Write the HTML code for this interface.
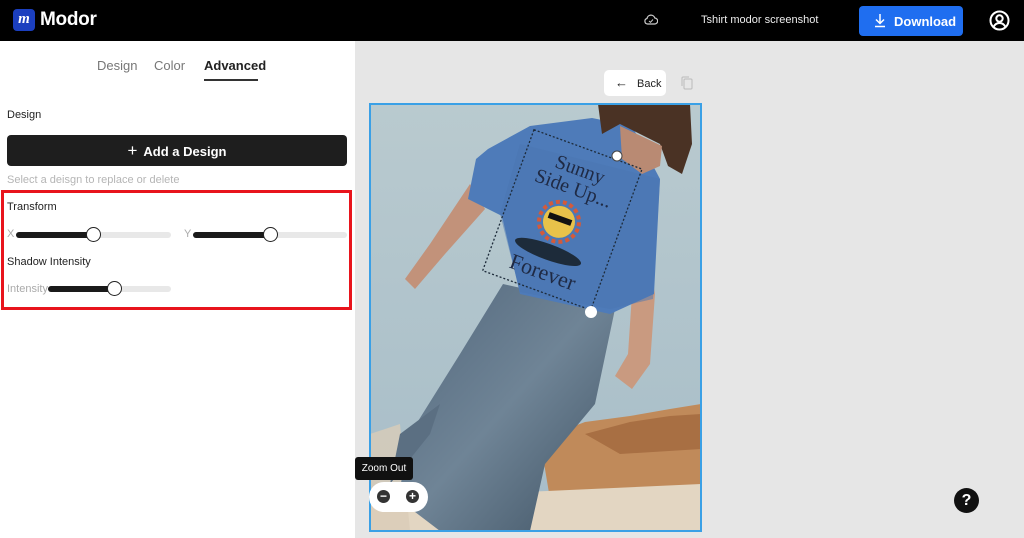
<!DOCTYPE html>
<html><head><meta charset="utf-8"><style>
*{margin:0;padding:0;box-sizing:border-box}
body{width:1024px;height:538px;overflow:hidden;font-family:"Liberation Sans",sans-serif;background:#e6e6e6;position:relative}
.top{position:absolute;left:0;top:0;width:1024px;height:41px;background:#000;color:#fff}
.abs{position:absolute}
.side{position:absolute;left:0;top:41px;width:355px;height:497px;background:#fff}
.track{position:absolute;height:6px;border-radius:3px;background:#e8e8e8}
.fill{position:absolute;left:0;top:0;height:6px;border-radius:3px;background:#1a1a1a}
.knob{position:absolute;width:15px;height:15px;border-radius:50%;background:#fff;border:1.5px solid #222;top:-5px}
.lbl{font-size:11px;color:#222}
.gr{font-size:11px;color:#aaa}
</style></head><body>
<div class="top">
  <div class="abs" style="left:13px;top:9px;width:22px;height:22px;border-radius:4px;background:#1b3fbf;color:#fff;font:italic bold 15px 'Liberation Serif',serif;text-align:center;line-height:21px">m</div>
  <div class="abs" style="left:40px;top:9px;font-size:19px;font-weight:bold;letter-spacing:-0.3px">Modor</div>
  <svg class="abs" style="left:644px;top:14px" width="14" height="12" viewBox="0 0 14 12"><path d="M3.5 10h7a3 3 0 0 0 .3-6A4 4 0 0 0 3 4.5 2.8 2.8 0 0 0 3.5 10z" fill="none" stroke="#ccc" stroke-width="1.2"/><path d="M5 7l1.5 1.3L9 5.5" fill="none" stroke="#ccc" stroke-width="1"/></svg>
  <div class="abs" style="left:701px;top:14px;font-size:11px;color:#eee">Tshirt modor screenshot</div>
  <div class="abs" style="left:859px;top:6px;width:104px;height:30px;border-radius:4px;background:#1f6ef0;"></div>
  <svg class="abs" style="left:873px;top:13px" width="14" height="15" viewBox="0 0 14 15"><path d="M7 1v9M3 6.5l4 4 4-4M2 13.5h10" fill="none" stroke="#fff" stroke-width="1.5"/></svg>
  <div class="abs" style="left:894px;top:14px;font-size:13px;font-weight:bold">Download</div>
  <svg class="abs" style="left:989px;top:10px" width="21" height="21" viewBox="0 0 21 21"><circle cx="10.5" cy="10.5" r="9" fill="none" stroke="#fff" stroke-width="2"/><circle cx="10.5" cy="8.5" r="3.2" fill="none" stroke="#fff" stroke-width="2"/><path d="M4.5 17c1.5-3 3.5-4 6-4s4.5 1 6 4" fill="none" stroke="#fff" stroke-width="2"/></svg>
</div>
<div class="side">
  <div class="abs" style="left:97px;top:17px;font-size:13px;color:#777">Design</div>
  <div class="abs" style="left:154px;top:17px;font-size:13px;color:#777">Color</div>
  <div class="abs" style="left:204px;top:17px;font-size:13px;color:#222;font-weight:bold">Advanced</div>
  <div class="abs" style="left:204px;top:38px;width:54px;height:2px;background:#333"></div>
  <div class="abs lbl" style="left:7px;top:68px">Design</div>
  <div class="abs" style="left:7px;top:94px;width:340px;height:31px;border-radius:4px;background:#1e1e1e;color:#fff;font-size:13px;font-weight:bold;text-align:center;line-height:31px"><span style="font-weight:normal;font-size:17px;margin-right:6px">+</span>Add a Design</div>
  <div class="abs gr" style="left:7px;top:133px;color:#b5b5b5">Select a deisgn to replace or delete</div>
  <div class="abs" style="left:1px;top:149px;width:351px;height:120px;border:3px solid #e8141c"></div>
  <div class="abs lbl" style="left:7px;top:160px">Transform</div>
  <div class="abs gr" style="left:7px;top:187px">X</div>
  <div class="track" style="left:16px;top:191px;width:155px"><div class="fill" style="width:78px"></div><div class="knob" style="left:70px"></div></div>
  <div class="abs gr" style="left:184px;top:187px">Y</div>
  <div class="track" style="left:193px;top:191px;width:154px"><div class="fill" style="width:78px"></div><div class="knob" style="left:70px"></div></div>
  <div class="abs lbl" style="left:7px;top:215px">Shadow Intensity</div>
  <div class="abs gr" style="left:7px;top:242px">Intensity</div>
  <div class="track" style="left:48px;top:245px;width:123px"><div class="fill" style="width:66px"></div><div class="knob" style="left:59px"></div></div>
</div>
<div class="abs" style="left:604px;top:70px;width:62px;height:26px;border-radius:5px;background:#fff;font-size:11px;color:#222;line-height:26px;padding-left:11px"><span style="font-size:13px;margin-right:9px">&#8592;</span>Back</div>
<svg class="abs" style="left:681px;top:76px" width="12" height="14" viewBox="0 0 12 14"><rect x="3" y="3" width="8" height="10" rx="1" fill="none" stroke="#bbb"/><path d="M1 10V2a1 1 0 0 1 1-1h6" fill="none" stroke="#bbb"/></svg>
<svg class="abs" style="left:369px;top:103px" width="333" height="429" viewBox="-1 -1 333 429">
  <defs><linearGradient id="sky" x1="0" y1="0" x2="0" y2="1"><stop offset="0" stop-color="#b9cacf"/><stop offset="1" stop-color="#a7bdc8"/></linearGradient>
  <linearGradient id="jn" x1="0" y1="0" x2="1" y2="1"><stop offset="0" stop-color="#52677c"/><stop offset=".5" stop-color="#6f8496"/><stop offset="1" stop-color="#3f5263"/></linearGradient></defs>
  <rect x="0" y="0" width="331" height="427" fill="url(#sky)"/>
  <path d="M170 335L215 318L260 312L300 305L331 300L331 395L180 395Z" fill="#c08a5a"/>
  <path d="M215 330L260 318L300 312L331 310L331 345L250 350Z" fill="#a86f43"/>
  <path d="M0 395L331 380L331 427L0 427Z" fill="#e3d6c2"/>
  <path d="M0 330L30 320L40 427L0 427Z" fill="#d9ccb8" opacity=".8"/>
  <path d="M133 180L245 205L225 300L175 360L160 427L70 427L28 395L40 330L90 250Z" fill="url(#jn)"/>
  <path d="M70 300L30 330L20 380L60 330Z" fill="#5b6f82"/>
  <path d="M100 80L60 140L35 175L45 185L75 150L115 105Z" fill="#c2927a"/>
  <path d="M268 90L285 190L280 260L262 285L245 272L258 250L262 190L255 120Z" fill="#c99a80"/>
  <path d="M118 45L160 22L222 14L262 22L290 75L284 190L240 210L150 190L132 112L98 95L106 55Z" fill="#4e7bb9"/>
  <path d="M150 40L290 75L283 195L240 205L150 188L130 110Z" fill="#4975b2" opacity=".5"/>
  <path d="M228 0L320 0L322 40L312 70L298 62L290 40L250 20L232 30Z" fill="#4a3224"/>
  <path d="M250 22L292 42L290 62L272 70L252 55Z" fill="#b98a73"/>
  <g transform="rotate(20 190 115)">
    <rect x="135" y="40" width="115" height="150" fill="none" stroke="#1d2b3a" stroke-width="1.3" stroke-dasharray="2 2"/>
    <text x="192" y="68" text-anchor="middle" font-family="Liberation Serif,serif" font-size="20" fill="#1f2a44">Sunny</text>
    <text x="192" y="88" text-anchor="middle" font-family="Liberation Serif,serif" font-size="20" fill="#1f2a44">Side Up...</text>
    <circle cx="190" cy="118" r="16" fill="#e8c24a"/>
    <circle cx="190" cy="118" r="20" fill="none" stroke="#d45a3a" stroke-width="4" stroke-dasharray="4 3"/>
    <rect x="178" y="112" width="24" height="6" fill="#111"/>
    <ellipse cx="190" cy="150" rx="35" ry="8" fill="#1d2b3a"/>
    <text x="192" y="178" text-anchor="middle" font-family="Liberation Serif,serif" font-size="22" fill="#1f2a44">Forever</text>
  </g>
  <circle cx="247" cy="52" r="5" fill="#fff" stroke="#444"/>
  <circle cx="221" cy="208" r="6" fill="#fff"/>
  <rect x="0" y="0" width="331" height="427" fill="none" stroke="#3aa0e6" stroke-width="2"/>
</svg>
<div class="abs" style="left:355px;top:457px;width:58px;height:23px;border-radius:3px;background:#111;color:#fff;font-size:10px;text-align:center;line-height:23px">Zoom Out</div>
<div class="abs" style="left:369px;top:482px;width:59px;height:30px;border-radius:15px;background:#fff"></div>
<div class="abs" style="left:377px;top:490px;width:13px;height:13px;border-radius:50%;background:#333;color:#fff;font-size:12px;line-height:12px;text-align:center;font-weight:bold">−</div>
<div class="abs" style="left:406px;top:490px;width:13px;height:13px;border-radius:50%;background:#333;color:#fff;font-size:12px;line-height:13px;text-align:center;font-weight:bold">+</div>
<div class="abs" style="left:954px;top:488px;width:25px;height:25px;border-radius:50%;background:#111;color:#fff;font-size:16px;font-weight:bold;text-align:center;line-height:25px">?</div>
</body></html>
